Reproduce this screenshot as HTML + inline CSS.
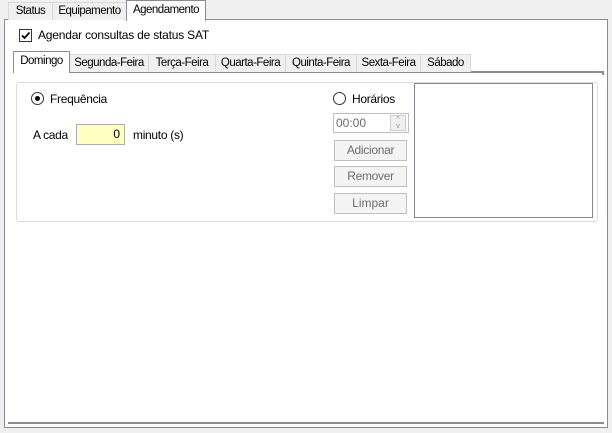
<!DOCTYPE html><html><head><style>
*{box-sizing:border-box}
body{margin:0;width:612px;height:433px;background:#f0f0f0;font-family:"Liberation Sans",sans-serif;font-size:12px;color:#000;position:relative;overflow:hidden}
.a{position:absolute}
.tab{position:absolute;background:#f0f0f0;border:1px solid #d9d9d9;border-bottom:none;text-align:center;line-height:16px;letter-spacing:-0.5px;font-size:11.5px}
.sel{background:#fff;border-color:#adadad}
.btn{position:absolute;left:334px;width:73px;height:21px;border:1px solid #bfbfbf;background:#f4f4f4;color:#6d6d6d;text-align:center;line-height:19px}
</style></head><body>
<div class="a" style="left:4px;top:19px;width:604px;height:409px;border:1px solid #898c95;background:#fff"></div>
<div class="tab" style="left:8px;top:2px;width:45px;height:18px">Status</div>
<div class="tab" style="left:52px;top:2px;width:75px;height:18px">Equipamento</div>
<div class="tab sel" style="left:126px;top:0;width:80px;height:21px;line-height:18px;border-color:#898c95">Agendamento</div>
<div class="a" style="left:19px;top:29px;width:13px;height:13px;border:1px solid #333;background:#fff"><svg width="11" height="11" style="position:absolute;left:0;top:0"><path d="M2 5.5 L4.5 8 L9.5 2.5" stroke="#000" stroke-width="1.8" fill="none"/></svg></div>
<div class="a" style="left:38px;top:28px;letter-spacing:-0.2px">Agendar consultas de status SAT</div>
<div class="a" style="left:8px;top:422px;width:596px;height:2px;background:#898c95"></div>
<div class="a" style="left:13px;top:71px;width:591px;height:2px;background:#898c95"></div>
<div class="a" style="left:602px;top:71px;width:2px;height:4px;background:#898c95"></div>
<div class="tab" style="left:69px;top:54px;width:80px;height:18px">Segunda-Feira</div>
<div class="tab" style="left:148px;top:54px;width:68px;height:18px">Terça-Feira</div>
<div class="tab" style="left:215px;top:54px;width:71px;height:18px">Quarta-Feira</div>
<div class="tab" style="left:285px;top:54px;width:72px;height:18px">Quinta-Feira</div>
<div class="tab" style="left:356px;top:54px;width:65px;height:18px">Sexta-Feira</div>
<div class="tab" style="left:420px;top:54px;width:51px;height:18px">Sábado</div>
<div class="tab sel" style="left:13px;top:51px;width:57px;height:22px;line-height:18px;border-color:#898c95">Domingo</div>
<div class="a" style="left:16px;top:82px;width:582px;height:140px;border:1px solid #dcdcdc;border-radius:3px"></div>
<div class="a" style="left:31px;top:92px;width:13px;height:13px;border:1px solid #333;border-radius:50%"><div class="a" style="left:3px;top:3px;width:5px;height:5px;border-radius:50%;background:#000"></div></div>
<div class="a" style="left:50px;top:92px;letter-spacing:-0.3px">Frequência</div>
<div class="a" style="left:333px;top:92px;width:13px;height:13px;border:1px solid #333;border-radius:50%"></div>
<div class="a" style="left:352px;top:92px;letter-spacing:-0.3px">Horários</div>
<div class="a" style="left:414px;top:83px;width:179px;height:135px;border:1px solid #828790;background:#fff"></div>
<div class="a" style="left:333px;top:113px;width:76px;height:20px;border:1px solid #bfbfbf;background:#fff;color:#6d6d6d;padding-left:2px;line-height:18px">00:00</div>
<div class="a" style="left:390px;top:115px;width:16px;height:16px;border:1px solid #ccc;background:#f0f0f0;font-size:7px;color:#888;text-align:center;line-height:7px">^<br>v</div>
<div class="btn" style="top:140px;letter-spacing:-0.3px">Adicionar</div>
<div class="btn" style="top:166px;letter-spacing:-0.3px">Remover</div>
<div class="btn" style="top:193px">Limpar</div>
<div class="a" style="left:33px;top:128px;letter-spacing:-0.3px">A cada</div>
<div class="a" style="left:76px;top:124px;width:49px;height:21px;border:1px solid #adadad;background:#ffffc0;text-align:right;padding-right:4px;line-height:19px">0</div>
<div class="a" style="left:133px;top:128px;letter-spacing:-0.3px">minuto (s)</div>
</body></html>
